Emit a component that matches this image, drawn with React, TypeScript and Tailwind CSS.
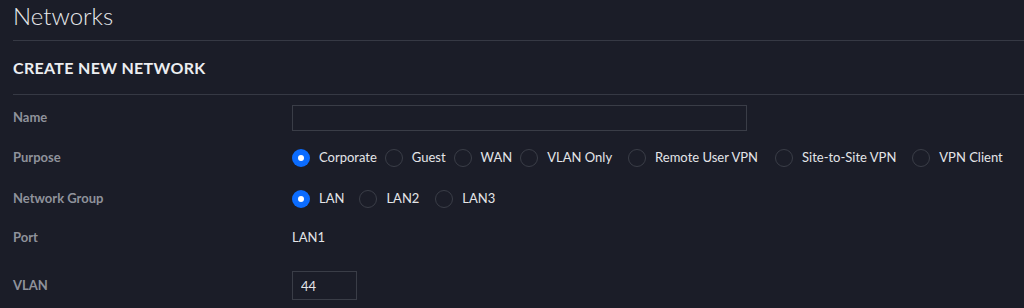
import React from "react";

type Option = { label: string; checked?: boolean; gap: string };

const purposes: Option[] = [
  { label: "Corporate", checked: true, gap: "mr-[8px]" },
  { label: "Guest", gap: "mr-[8px]" },
  { label: "WAN", gap: "mr-[8px]" },
  { label: "VLAN Only", gap: "mr-[16px]" },
  { label: "Remote User VPN", gap: "mr-[17px]" },
  { label: "Site-to-Site VPN", gap: "mr-[16px]" },
  { label: "VPN Client", gap: "mr-0" },
];

const groups: Option[] = [
  { label: "LAN", checked: true, gap: "mr-[15px]" },
  { label: "LAN2", gap: "mr-[16px]" },
  { label: "LAN3", gap: "mr-0" },
];

function Radio({ label, checked, gap }: Option) {
  return (
    <label className={`flex items-center ${gap}`}>
      {checked ? (
        <span className="flex h-[18px] w-[18px] items-center justify-center rounded-full bg-[#0b6cff]">
          <span className="h-[6px] w-[6px] rounded-full bg-white" />
        </span>
      ) : (
        <span className="h-[18px] w-[18px] rounded-full border border-[#3a3d47]" />
      )}
      <span className="ml-[9px] text-[13px] text-[#e4e5e8]">{label}</span>
    </label>
  );
}

function Row({
  label,
  className,
  children,
}: {
  label: string;
  className: string;
  children: React.ReactNode;
}) {
  return (
    <div className={`flex items-center ${className}`}>
      <div className="w-[279px] shrink-0 text-[13px] font-bold text-[#8f929b]">
        {label}
      </div>
      <div className="flex items-center">{children}</div>
    </div>
  );
}

export default function App() {
  return (
    <div
      className="h-[308px] w-[1024px] overflow-hidden bg-[#1b1d28] pl-[13px]"
      style={{ fontFamily: "Lato, 'Open Sans', sans-serif" }}
    >
      {/* Page title */}
      <div className="flex h-[41px] items-start border-b border-[#363944]">
        <h1 className="mt-[1px] text-[24px] font-light leading-[30px] text-[#e8e9ec]">
          Networks
        </h1>
      </div>

      {/* Section header */}
      <div className="flex h-[54px] items-center border-b border-[#363944]">
        <h2 className="mt-[1px] text-[16px] font-bold tracking-[0.02em] text-[#eceef1]">
          CREATE NEW NETWORK
        </h2>
      </div>

      {/* Form */}
      <Row label="Name" className="mt-[10px] h-[26px]">
        <input
          className="h-[26px] w-[455px] border border-[#3a3d47] bg-transparent px-2 text-[13px] text-white outline-none"
          defaultValue=""
        />
      </Row>

      <Row label="Purpose" className="mt-[14px] h-[26px]">
        {purposes.map((p) => (
          <Radio key={p.label} {...p} />
        ))}
      </Row>

      <Row label="Network Group" className="mt-[15px] h-[26px]">
        {groups.map((g) => (
          <Radio key={g.label} {...g} />
        ))}
      </Row>

      <Row label="Port" className="mt-[13px] h-[26px]">
        <span className="text-[13px] text-[#e4e5e8]">LAN1</span>
      </Row>

      <Row label="VLAN" className="mt-[20px] h-[29px]">
        <input
          className="h-[29px] w-[65px] border border-[#3a3d47] bg-transparent px-[8px] text-[13px] text-[#e4e5e8] outline-none"
          defaultValue="44"
        />
      </Row>
    </div>
  );
}
